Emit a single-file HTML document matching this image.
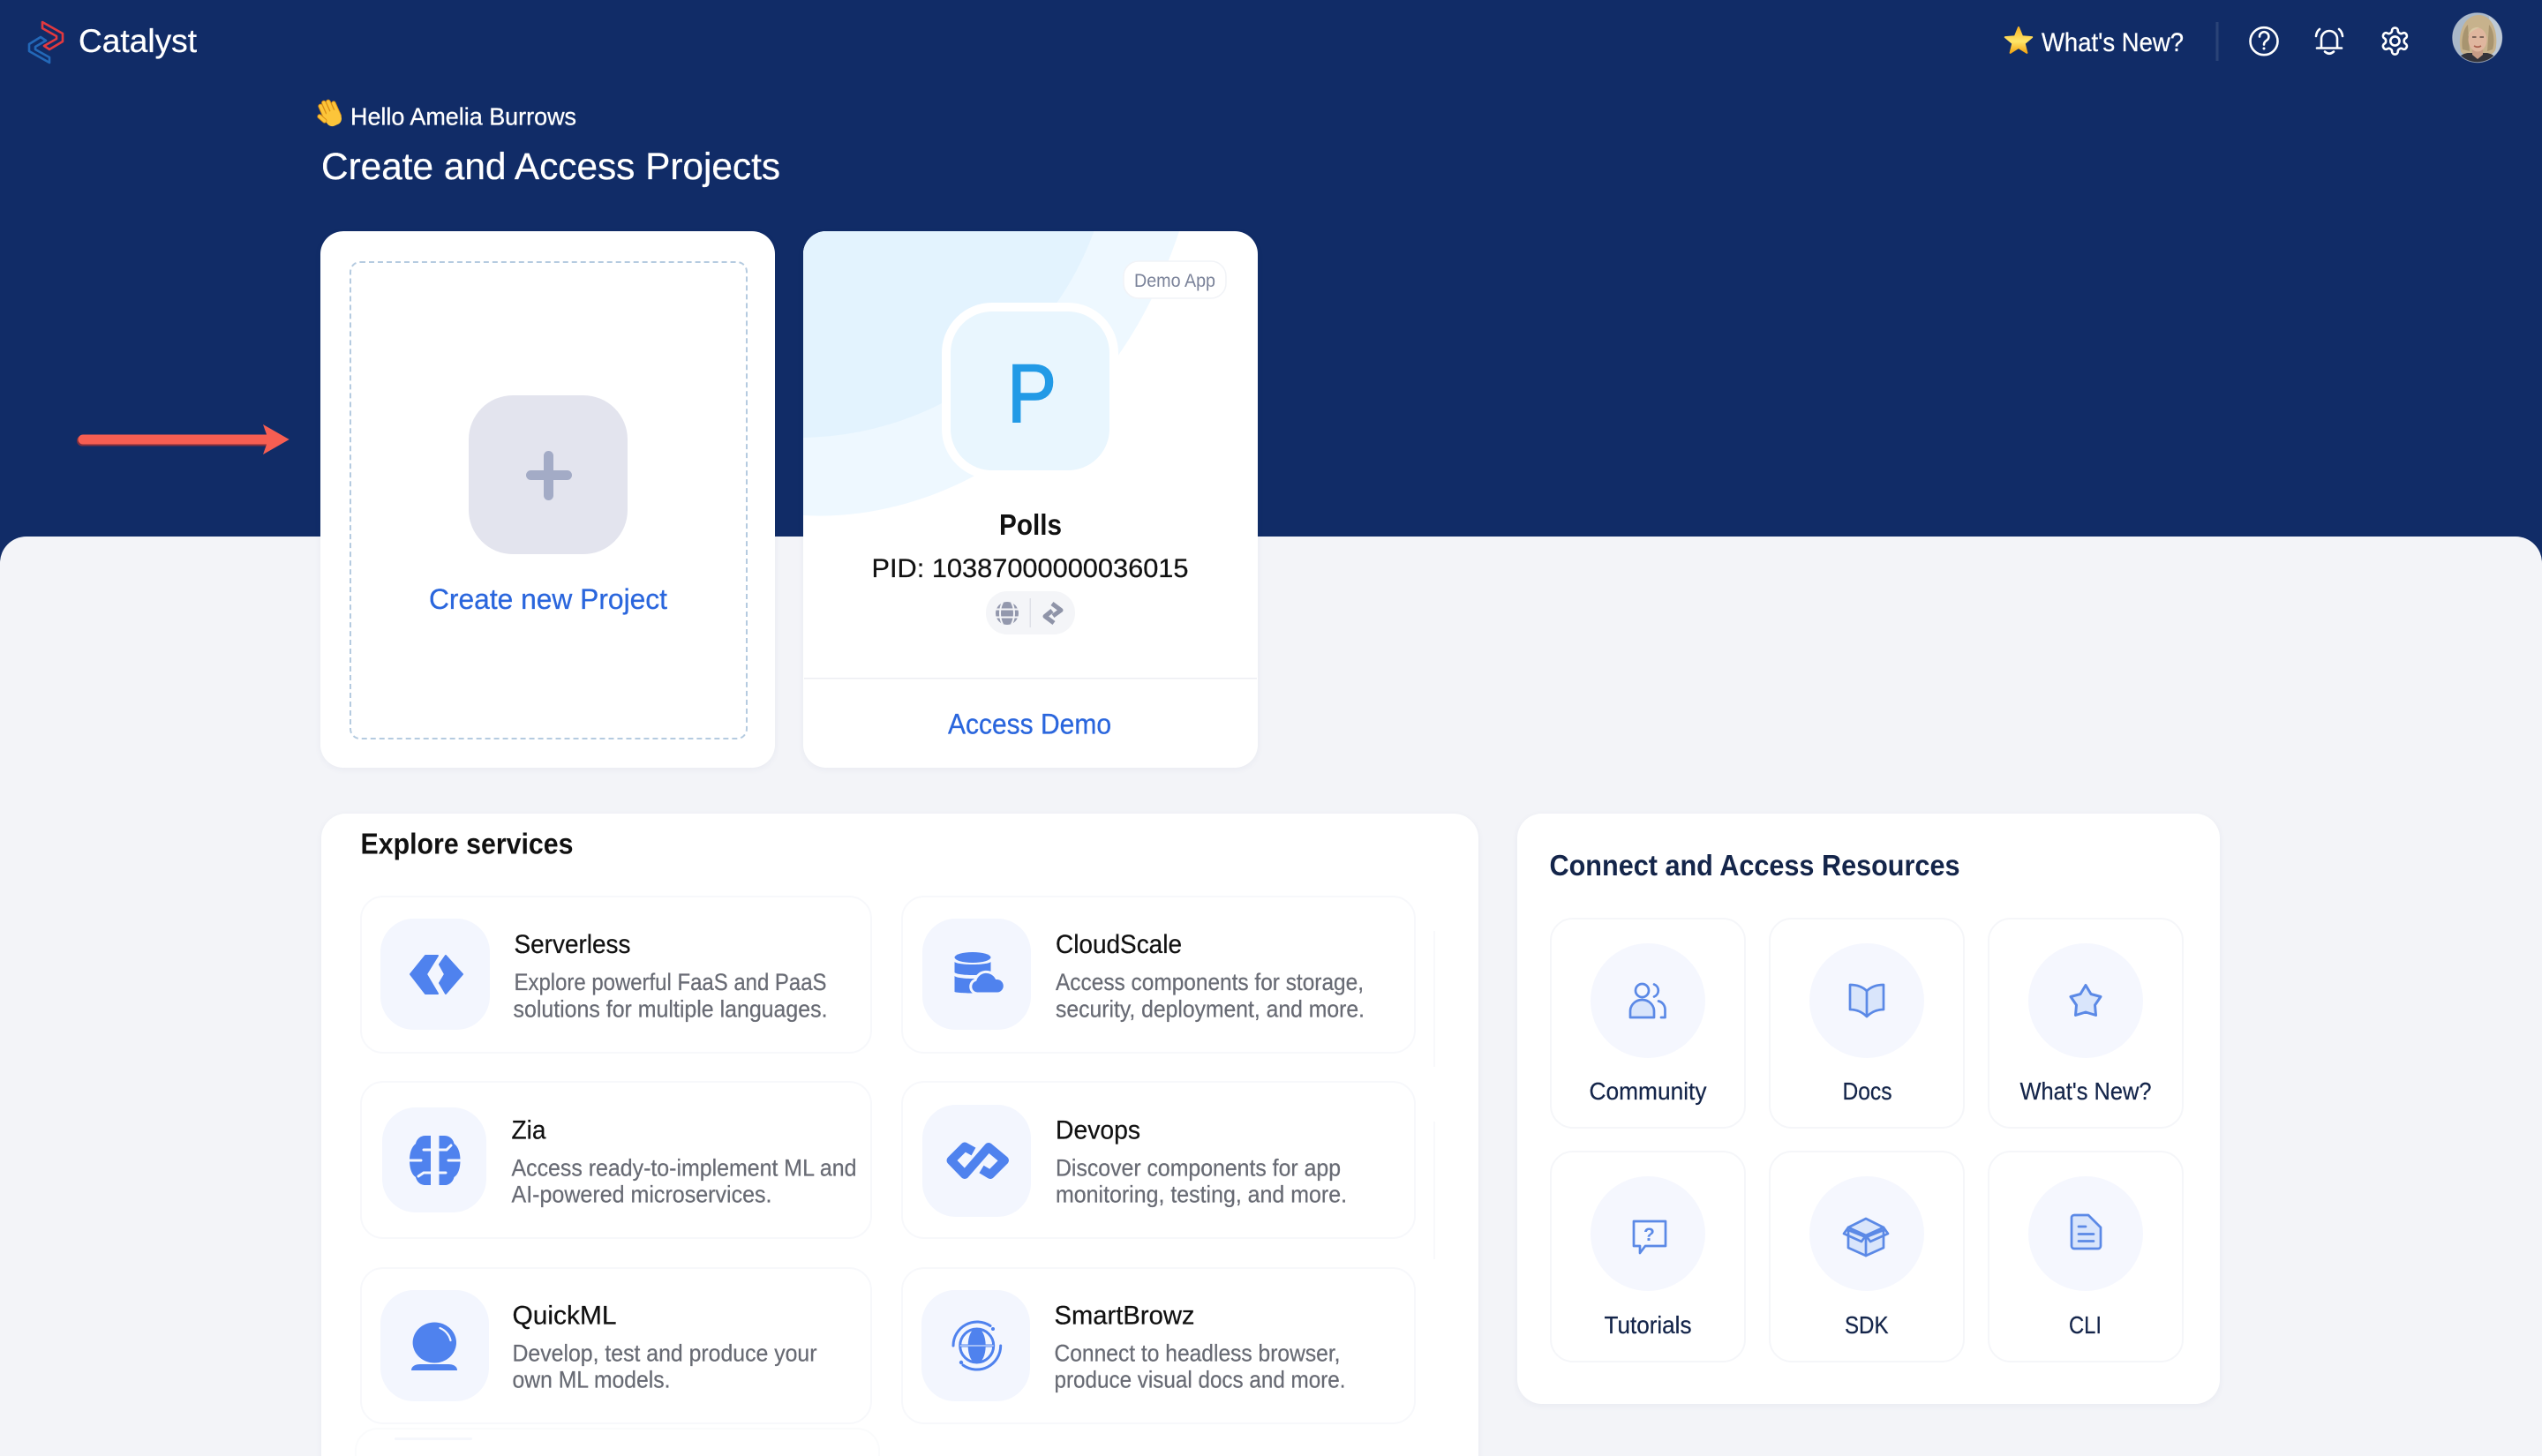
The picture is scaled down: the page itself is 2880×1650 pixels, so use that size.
<!DOCTYPE html>
<html lang="en"><head><meta charset="utf-8"><title>Catalyst</title>
<style>
html,body{margin:0;padding:0;width:2880px;height:1650px;overflow:hidden;background:#112c67}
#root{position:relative;width:2880px;height:1650px;overflow:hidden;background:#112c67}
.b{position:absolute;box-sizing:border-box}
#panel{left:0;top:608px;width:2880px;height:1042px;background:#f3f4f8;border-radius:30px 30px 0 0}
.card{background:#fff;border-radius:26px;box-shadow:0 2px 8px rgba(40,60,110,.05)}
.svc{background:#fff;border:2px solid #f7f8fb;border-radius:26px}
.tile{background:#f3f6fe;border-radius:38px}
.res{background:#fff;border:2px solid #f5f6f9;border-radius:26px}
.circ{background:#f5f7fe;border-radius:50%;width:130px;height:130px}
svg#o{position:absolute;left:0;top:0}
text{font-family:"Liberation Sans",sans-serif}
.w{fill:#fff;stroke:#fff;stroke-width:.3}
.t{fill:#111;stroke:#111;stroke-width:.25;font-size:30px}
.d{fill:#686b74;stroke:#686b74;stroke-width:.25;font-size:27px}
.r{fill:#14254a;stroke:#14254a;stroke-width:.25;font-size:28px}
.l{fill:#2a66dd;stroke:#2a66dd;stroke-width:.3;font-size:32px}
.ri{fill:#d9e5fb;stroke:#5b89e6;stroke-width:2.7;stroke-linejoin:round;stroke-linecap:round}
.rn{fill:none;stroke:#5b89e6;stroke-width:2.7;stroke-linejoin:round;stroke-linecap:round}
.nav{fill:none;stroke:#fff;stroke-width:2.6;stroke-linecap:round;stroke-linejoin:round}
</style></head><body>
<div id="root">
<div class="b" id="panel"></div>
<div class="b card" style="left:363px;top:262px;width:515px;height:608px"></div>
<div class="b" style="left:396px;top:296px;width:451px;height:542px;border:2px dashed #b5cbe0;border-radius:12px"></div>
<div class="b" style="left:531px;top:448px;width:180px;height:180px;background:#e3e4ee;border-radius:50px"></div>
<div class="b card" style="left:910px;top:262px;width:515px;height:608px"></div>
<div class="b card" style="left:364px;top:922px;width:1311px;height:760px;border-radius:28px"></div>
<div class="b card" style="left:1719px;top:922px;width:796px;height:669px;border-radius:28px"></div>
<div class="b svc" style="left:408px;top:1015px;width:580px;height:179px"></div>
<div class="b svc" style="left:408px;top:1225px;width:580px;height:179px"></div>
<div class="b svc" style="left:408px;top:1436px;width:580px;height:178px"></div>
<div class="b svc" style="left:402px;top:1618px;width:595px;height:100px;border-color:#fafbfc"></div>
<div class="b" style="left:447px;top:1629px;width:88px;height:3px;background:#f5f7fc;border-radius:2px"></div>
<div class="b svc" style="left:1021px;top:1015px;width:583px;height:179px"></div>
<div class="b svc" style="left:1021px;top:1225px;width:583px;height:179px"></div>
<div class="b svc" style="left:1021px;top:1436px;width:583px;height:178px"></div>
<div class="b" style="left:1624px;top:1055px;width:2px;height:154px;background:#f8f9fb"></div>
<div class="b" style="left:1624px;top:1271px;width:2px;height:156px;background:#f8f9fb"></div>
<div class="b tile" style="left:431px;top:1041px;width:124px;height:126px"></div>
<div class="b tile" style="left:433px;top:1255px;width:118px;height:119px"></div>
<div class="b tile" style="left:431px;top:1462px;width:123px;height:126px"></div>
<div class="b tile" style="left:1045px;top:1041px;width:123px;height:126px"></div>
<div class="b tile" style="left:1045px;top:1252px;width:123px;height:127px"></div>
<div class="b tile" style="left:1044px;top:1462px;width:123px;height:126px"></div>
<div class="b res" style="left:1756px;top:1040px;width:222px;height:239px"></div>
<div class="b res" style="left:2004px;top:1040px;width:222px;height:239px"></div>
<div class="b res" style="left:2252px;top:1040px;width:222px;height:239px"></div>
<div class="b res" style="left:1756px;top:1304px;width:222px;height:240px"></div>
<div class="b res" style="left:2004px;top:1304px;width:222px;height:240px"></div>
<div class="b res" style="left:2252px;top:1304px;width:222px;height:240px"></div>
<div class="b circ" style="left:1802px;top:1069px"></div>
<div class="b circ" style="left:2050px;top:1069px"></div>
<div class="b circ" style="left:2298px;top:1069px"></div>
<div class="b circ" style="left:1802px;top:1333px"></div>
<div class="b circ" style="left:2050px;top:1333px"></div>
<div class="b circ" style="left:2298px;top:1333px"></div>

<svg id="o" width="2880" height="1650" viewBox="0 0 2880 1650" xmlns="http://www.w3.org/2000/svg">
<defs>
<clipPath id="c2"><rect x="910" y="262" width="515" height="608" rx="26"/></clipPath>
<clipPath id="av"><circle cx="2806.7" cy="42.7" r="28"/></clipPath>
<linearGradient id="st" x1="0" y1="0" x2="0" y2="1"><stop offset="0" stop-color="#f8b324"/><stop offset=".55" stop-color="#ffe66a"/><stop offset="1" stop-color="#f3a512"/></linearGradient>
</defs>
<!-- logo -->
<path d="M48 25L71 38V47L56 56L50 52L64 44V41L48 32Z" fill="none" stroke="#e2393f" stroke-width="2.6" stroke-linejoin="round"/>
<path d="M33 50L46 42L52 46L40 53V56L56 65V71L33 58Z" fill="none" stroke="#2368b8" stroke-width="2.6" stroke-linejoin="round"/>
<text x="89" y="59" class="w" font-size="37" textLength="134" lengthAdjust="spacingAndGlyphs">Catalyst</text>
<!-- wave -->
<g transform="rotate(-24 373 131)" fill="#fcc53a" stroke="#d98c14" stroke-width=".9">
<rect x="366" y="115" width="4.6" height="22" rx="2.3"/><rect x="371" y="113" width="4.600" height="24" rx="2.3"/><rect x="376" y="114" width="4.6" height="23" rx="2.3"/><rect x="381" y="118" width="4.4" height="20" rx="2.2"/>
<rect x="367" y="127" width="18" height="17" rx="7" stroke="none"/>
<rect x="362" y="125" width="4.5" height="12" rx="2.2" transform="rotate(-25 364 131)"/>
</g>
<text x="397" y="141.5" class="w" font-size="28" textLength="256" lengthAdjust="spacingAndGlyphs">Hello Amelia Burrows</text>
<text x="364" y="203" class="w" font-size="43" textLength="520" lengthAdjust="spacingAndGlyphs">Create and Access Projects</text>
<!-- top right -->
<path transform="translate(2287 47)" d="M0-16L4.1-5.7 15.2-4.9 6.7 2.2 9.4 12.9 0 7-9.4 12.9-6.7 2.2-15.2-4.9-4.1-5.7Z" fill="url(#st)" stroke="url(#st)" stroke-width="2" stroke-linejoin="round"/>
<text x="2313" y="58" class="w" font-size="30" textLength="161" lengthAdjust="spacingAndGlyphs">What's New?</text>
<rect x="2510.5" y="25" width="3" height="44" fill="#2a4377"/>
<circle cx="2565" cy="46.7" r="15.5" class="nav"/>
<path d="M2560 41.5a5.2 5.2 0 1 1 8 4.3c-2 1.3-3 2.4-3 4.7" class="nav" stroke-width="2.2"/><circle cx="2565" cy="55" r="1.5" fill="#fff"/>
<path d="M2630 54V44a9 9 0 0 1 18 0V54M2625 54.5H2653M2634 58.5q5 4.5 10 0M2628 33q-3.5 3-4 8M2650 33q3.5 3 4 8" class="nav"/>
<g transform="translate(2695.4 28.5) scale(1.5)"><path d="M12.22 2h-.44a2 2 0 0 0-2 2v.18a2 2 0 0 1-1 1.73l-.43.25a2 2 0 0 1-2 0l-.15-.08a2 2 0 0 0-2.73.73l-.22.38a2 2 0 0 0 .73 2.73l.15.1a2 2 0 0 1 1 1.72v.51a2 2 0 0 1-1 1.74l-.15.09a2 2 0 0 0-.73 2.73l.22.38a2 2 0 0 0 2.73.73l.15-.08a2 2 0 0 1 2 0l.43.25a2 2 0 0 1 1 1.73V20a2 2 0 0 0 2 2h.44a2 2 0 0 0 2-2v-.18a2 2 0 0 1 1-1.73l.43-.25a2 2 0 0 1 2 0l.15.08a2 2 0 0 0 2.73-.73l.22-.39a2 2 0 0 0-.73-2.73l-.15-.08a2 2 0 0 1-1-1.74v-.5a2 2 0 0 1 1-1.74l.15-.09a2 2 0 0 0 .73-2.73l-.22-.38a2 2 0 0 0-2.73-.73l-.15.08a2 2 0 0 1-2 0l-.43-.25a2 2 0 0 1-1-1.73V4a2 2 0 0 0-2-2z" fill="none" stroke="#fff" stroke-width="1.75" stroke-linejoin="round"/><circle cx="12" cy="12" r="3.400" fill="none" stroke="#fff" stroke-width="1.75"/></g>
<g clip-path="url(#av)">
<rect x="2778" y="14" width="58" height="58" fill="#a9b8c9"/>
<rect x="2820" y="14" width="16" height="58" fill="#bfcad6"/>
<path d="M2788 58C2784 40 2790 18 2808 17C2824 17 2830 36 2828 52C2828 58 2824 62 2820 62H2796C2792 62 2789 61 2788 58Z" fill="#c7b28c"/>
<path d="M2790 56C2788 46 2791 32 2796 28L2798 58ZM2824 56C2827 46 2825 34 2820 28L2818 58Z" fill="#a8946f"/>
<path d="M2782 72q4-11 14-12h22q10 2 13 12Z" fill="#34343a"/>
<path d="M2801 56h12v6l-6 5-6-5Z" fill="#c89d86"/>
<ellipse cx="2807" cy="45" rx="10.500" ry="13.500" fill="#dfb69e"/>
<path d="M2796 42q2-12 13-11-6 3-9 5-3 2-4 6Z" fill="#d9c8a4"/>
<path d="M2801 42h4.500M2809.500 42h4.500" stroke="#5e4a42" stroke-width="1.500"/><path d="M2803 52q4 2.500 8 0" stroke="#a9614f" stroke-width="1.700" fill="none"/>
</g>
<circle cx="2806.7" cy="42.7" r="28" fill="none" stroke="#c9d2dd" stroke-width="1" opacity=".6"/>
<!-- arrow -->
<path d="M94 498H305" stroke="#7d2f3f" stroke-width="12" stroke-linecap="round" transform="translate(-1 1.5)"/>
<path d="M94 498H305" stroke="#f65e52" stroke-width="11" stroke-linecap="round"/>
<path d="M298 481L327.7 498 298 515 304 498Z" fill="#f65e52"/>
<!-- plus -->
<rect x="616" y="511" width="11" height="56" rx="5.5" fill="#a3abc6"/>
<rect x="596" y="533" width="52" height="11" rx="5.5" fill="#a3abc6"/>
<text x="486" y="690" class="l" textLength="270" lengthAdjust="spacingAndGlyphs">Create new Project</text>
<!-- card2 -->
<g clip-path="url(#c2)">
<path d="M910 584C1010 590 1100 548 1150 510C1240 460 1300 370 1336 262H910Z" fill="#eef8ff"/>
<circle cx="905" cy="140" r="356" fill="#e3f3fe"/>
</g>
<rect x="1072" y="348" width="190" height="190" rx="52" fill="#e9f6fe" stroke="#fff" stroke-width="10"/>
<rect x="1273" y="296" width="116" height="42" rx="17" fill="#fff" stroke="#f1f3f7" stroke-width="1.5"/>
<text x="1285" y="325" fill="#7a8299" font-size="21" textLength="92" lengthAdjust="spacingAndGlyphs">Demo App</text>
<text x="1141" y="478" fill="#229ae6" stroke="#229ae6" stroke-width="1.600" font-size="94" textLength="56" lengthAdjust="spacingAndGlyphs">P</text>
<text x="1132" y="606" fill="#111" font-size="33" font-weight="bold" textLength="71" lengthAdjust="spacingAndGlyphs">Polls</text>
<text x="987.500" y="654" fill="#111" stroke="#111" stroke-width=".25" font-size="30" textLength="359" lengthAdjust="spacingAndGlyphs">PID: 10387000000036015</text>
<rect x="1117" y="670" width="101" height="49" rx="24" fill="#f4f5f8"/>
<circle cx="1141" cy="695" r="13" fill="#9398ad"/>
<path d="M1128 690.500H1154M1128 699.500H1154M1136 682.500C1132 690 1132 700 1136 707.500M1146 682.500C1150 690 1150 700 1146 707.500" stroke="#f4f5f8" stroke-width="2" fill="none"/>
<rect x="1166.500" y="678" width="1.500" height="33" fill="#dfe1e8"/>
<path d="M1192 684L1202 691.500 1193 698M1194 706L1184 698.500 1192 692" fill="none" stroke="#8f94a8" stroke-width="5" stroke-linejoin="round"/>
<rect x="911" y="768" width="513" height="1.500" fill="#eceef3"/>
<text x="1074" y="831.500" class="l" textLength="185" lengthAdjust="spacingAndGlyphs">Access Demo</text>
<!-- services -->
<text x="408.500" y="967.500" fill="#111" font-size="33" font-weight="bold" textLength="241" lengthAdjust="spacingAndGlyphs">Explore services</text>
<text x="582.500" y="1080" class="t" textLength="132" lengthAdjust="spacingAndGlyphs">Serverless</text>
<text x="582.500" y="1122" class="d" textLength="354" lengthAdjust="spacingAndGlyphs">Explore powerful FaaS and PaaS</text>
<text x="581.500" y="1152.500" class="d" textLength="356" lengthAdjust="spacingAndGlyphs">solutions for multiple languages.</text>
<text x="579.500" y="1290.500" class="t" textLength="39" lengthAdjust="spacingAndGlyphs">Zia</text>
<text x="579.500" y="1332.500" class="d" textLength="391" lengthAdjust="spacingAndGlyphs">Access ready-to-implement ML and</text>
<text x="579.500" y="1362.500" class="d" textLength="295" lengthAdjust="spacingAndGlyphs">AI-powered microservices.</text>
<text x="580.500" y="1500.500" class="t" textLength="118" lengthAdjust="spacingAndGlyphs">QuickML</text>
<text x="580.500" y="1542.500" class="d" textLength="345" lengthAdjust="spacingAndGlyphs">Develop, test and produce your</text>
<text x="580.500" y="1572.500" class="d" textLength="179" lengthAdjust="spacingAndGlyphs">own ML models.</text>
<text x="1196" y="1080" class="t" textLength="143" lengthAdjust="spacingAndGlyphs">CloudScale</text>
<text x="1196" y="1122" class="d" textLength="349" lengthAdjust="spacingAndGlyphs">Access components for storage,</text>
<text x="1196" y="1152.500" class="d" textLength="350" lengthAdjust="spacingAndGlyphs">security, deployment, and more.</text>
<text x="1196" y="1290.500" class="t" textLength="96" lengthAdjust="spacingAndGlyphs">Devops</text>
<text x="1196" y="1332.500" class="d" textLength="323" lengthAdjust="spacingAndGlyphs">Discover components for app</text>
<text x="1196" y="1362.500" class="d" textLength="330" lengthAdjust="spacingAndGlyphs">monitoring, testing, and more.</text>
<text x="1194.500" y="1500.500" class="t" textLength="159" lengthAdjust="spacingAndGlyphs">SmartBrowz</text>
<text x="1194.500" y="1542.500" class="d" textLength="324" lengthAdjust="spacingAndGlyphs">Connect to headless browser,</text>
<text x="1194.500" y="1572.500" class="d" textLength="330" lengthAdjust="spacingAndGlyphs">produce visual docs and more.</text>
<!-- service icons -->
<g fill="#4f82ee" stroke="#4f82ee" stroke-width="2" stroke-linejoin="round">
<path d="M465 1104L482 1083H496L483 1104 496 1126H482Z"/>
<path d="M505 1083L524 1104 505 1126 498 1114 504 1104 498 1093Z"/>
</g>
<g fill="#4f82ee">
<path d="M488 1287V1343H482C475 1343 472 1338 471 1334C466 1331 464 1323 464 1315C464 1307 466 1300 471 1296C472 1291 476 1287 482 1287Z"/>
<path d="M497.500 1287V1343H503.500C510.500 1343 513.500 1338 514.500 1334C519.500 1331 521.500 1323 521.500 1315C521.500 1307 519.500 1300 514.500 1296C513.500 1291 509.500 1287 503.500 1287Z"/>
</g>
<path d="M464 1315H477M488 1303H480M488 1329H480l-6 4M497.500 1303H506l5-5M521.500 1315H508M497.500 1329H505" stroke="#f3f6fe" stroke-width="3" fill="none" stroke-linecap="round"/>
<ellipse cx="492.300" cy="1521.500" rx="24.700" ry="23" fill="#4f82ee"/>
<path d="M498.500 1505a20 20 0 0 1 12 14" stroke="#f3f6fe" stroke-width="2.200" fill="none" stroke-linecap="round"/>
<path d="M466 1553c0-5 5-7 10-7h32c5 0 10 2 10 7Z" fill="#4f82ee"/>
<!-- cloudscale -->
<g fill="#4f82ee">
<ellipse cx="1102" cy="1085" rx="20.500" ry="6"/>
<path d="M1081.500 1090c4 4 37 4 41 0v12c-4 4-37 4-41 0ZM1081.500 1106c4 4 37 4 41 0v18c-4 2-37 2-41 0Z"/>
<path d="M1107 1126a8 8 0 0 1-2-15.500 13 13 0 0 1 24-2 8.500 8.500 0 0 1 1 17.500Z" stroke="#f3f6fe" stroke-width="3"/>
</g>
<path d="M1103 1305L1093 1299.500 1077.500 1315 1093 1331 1120 1300 1138 1315 1122 1331 1112 1325" fill="none" stroke="#4f82ee" stroke-width="10" stroke-linejoin="round"/>
<g fill="none" stroke="#4f82ee">
<circle cx="1106.700" cy="1525" r="19" stroke-width="3"/>
<ellipse cx="1106.700" cy="1525" rx="9" ry="19" fill="#4f82ee" stroke-width="2"/>
<path d="M1087.700 1525H1125.700" stroke-width="3"/>
<path d="M1122 1502.500A27 27 0 0 0 1080 1525M1091 1547A27 27 0 0 0 1133.700 1525" stroke-width="3" stroke-linecap="round"/>
</g>
<circle cx="1125" cy="1506" r="2" fill="#4f82ee"/><circle cx="1089" cy="1544" r="2.200" fill="#4f82ee"/>
<path d="M1087.700 1525H1125.700" stroke="#f3f6fe" stroke-width="1"/>
<!-- resources -->
<text x="1755.500" y="992" fill="#14254a" font-size="33" font-weight="bold" textLength="465" lengthAdjust="spacingAndGlyphs">Connect and Access Resources</text>
<text x="1800.500" y="1246" class="r" textLength="133" lengthAdjust="spacingAndGlyphs">Community</text>
<text x="2087.500" y="1246" class="r" textLength="56" lengthAdjust="spacingAndGlyphs">Docs</text>
<text x="2288.500" y="1246" class="r" textLength="149" lengthAdjust="spacingAndGlyphs">What's New?</text>
<text x="1817.500" y="1511" class="r" textLength="99" lengthAdjust="spacingAndGlyphs">Tutorials</text>
<text x="2090" y="1511" class="r" textLength="49.500" lengthAdjust="spacingAndGlyphs">SDK</text>
<text x="2344" y="1511" class="r" textLength="37" lengthAdjust="spacingAndGlyphs">CLI</text>
<circle cx="1860.500" cy="1122.500" r="7.500" class="ri" style="fill:none"/>
<path d="M1847 1153V1146a13.500 13 0 0 1 27 0V1153Z" class="ri"/>
<path d="M1874 1115.500a7.500 7.500 0 0 1 0 14M1879 1134.500a9 10 0 0 1 7.500 10V1153H1882" class="rn"/>
<path d="M2115 1123C2110 1118 2103 1116 2096 1116V1144C2104 1144 2110 1147 2115 1152C2120 1147 2126 1144 2134 1144V1116C2127 1116 2120 1118 2115 1123ZM2115 1123V1152" class="ri"/>
<path transform="translate(2363 1136)" d="M0-19.500L6-9.500 17-6.500 10.500 3 11.500 14.500 0 11-11.500 14.500-10.500 3-17-6.500-6-9.500Z" class="ri" style="stroke-width:3"/>
<path d="M1851 1384H1887V1412H1864L1858 1420V1412H1851Z" class="ri" style="fill:#f5f7fe"/>
<text x="1862" y="1406" fill="#5b89e6" font-size="21" font-weight="bold">?</text>
<path d="M2094 1394V1414L2114 1423 2134 1414V1394L2114 1402Z" class="ri"/>
<path d="M2094 1391L2114 1381 2134 1391 2114 1400Z" class="ri"/>
<path d="M2094 1391L2089 1398 2109 1407 2114 1400 2119 1407 2139 1398 2134 1391M2114 1400V1423" class="rn"/>
<path d="M2350 1377H2366L2380 1391V1412a3 3 0 0 1-3 3H2350a3 3 0 0 1-3-3V1380a3 3 0 0 1 3-3Z" class="ri"/>
<path d="M2355 1390H2363M2355 1398.500H2372M2355 1406.500H2372" class="rn"/>
</svg>
</div>
</body></html>
